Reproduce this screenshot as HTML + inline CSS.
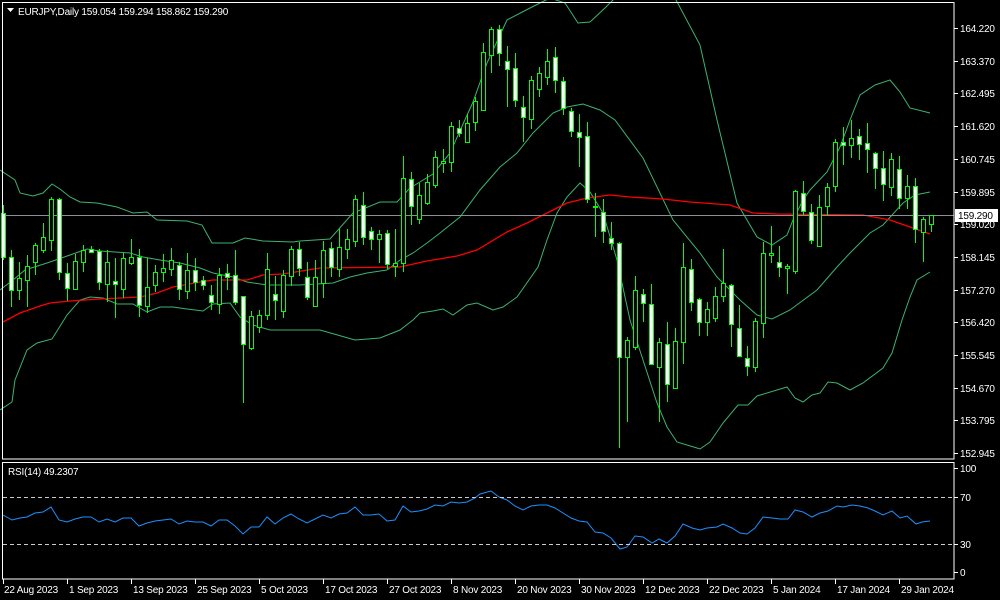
<!DOCTYPE html>
<html><head><meta charset="utf-8"><style>
html,body{margin:0;padding:0;background:#000;width:1000px;height:600px;overflow:hidden}
svg{display:block}
text{font-family:"Liberation Sans",sans-serif;font-size:10px;letter-spacing:-0.2px;fill:#fff}
</style></head><body>
<svg id="s" width="1000" height="600" xmlns="http://www.w3.org/2000/svg">
<rect width="1000" height="600" fill="#000"/>
<g id="bands" fill="none" stroke="#3cb371" stroke-width="1"></g>
<polyline id="ma" fill="none" stroke="#ff0000" stroke-width="1.3"/>
<line x1="3" y1="215.5" x2="954" y2="215.5" stroke="#8a8f96" stroke-width="1"/>
<g id="candles"></g>
<g id="rsi"></g>
<g stroke="#fff" stroke-width="1" fill="none">
<rect x="2.5" y="2.5" width="951.5" height="456.5"/>
<rect x="2.5" y="462.5" width="951.5" height="116.5"/>
</g>
<g stroke="#ccc" stroke-dasharray="4,3" stroke-width="1">
<line x1="3" y1="497.5" x2="953" y2="497.5"/>
<line x1="3" y1="544.5" x2="953" y2="544.5"/>
</g>
<polygon points="7,8 14,8 10.5,12" fill="#fff"/>
<text x="18" y="15">EURJPY,Daily  159.054 159.294 158.862 159.290</text>
<text x="8" y="475">RSI(14) 49.2307</text>
<g id="axis"></g>
<rect x="955" y="209" width="43" height="13" fill="#fff"/>
<text x="958" y="219" style="fill:#000">159.290</text>
</svg>
<script>
var NS="http://www.w3.org/2000/svg";
function el(t,a,p){var e=document.createElementNS(NS,t);for(var k in a)e.setAttribute(k,a[k]);p.appendChild(e);return e;}
var C=[[213,257,205,260,1],[257,290,250,307,1],[278,290,262,300,0],[266,280,255,307,0],[245,262,243,275,0],[237,250,223,253,0],[199,240,197,251,0],[199,272,198,280,1],[273,288,263,301,1],[261,289,254,290,0],[250,262,245,272,0],[249,252,246,253,1],[251,282,249,290,1],[262,284,250,302,0],[281,284,258,318,1],[258,289,253,298,0],[257,263,239,265,0],[257,305,249,317,1],[287,306,258,313,0],[272,285,265,292,0],[268,272,254,282,0],[260,269,248,276,0],[265,289,262,300,1],[270,291,253,299,0],[270,282,258,291,1],[280,285,276,290,1],[295,302,285,310,1],[275,304,268,314,0],[273,277,264,290,1],[275,302,250,305,1],[296,344,296,403,1],[316,348,311,350,0],[315,327,310,333,0],[269,315,253,320,0],[294,300,276,320,1],[275,311,270,318,0],[249,276,246,286,0],[249,268,242,276,1],[277,297,262,300,1],[277,306,260,307,0],[250,283,241,298,0],[248,267,242,277,1],[247,269,229,277,0],[239,249,229,259,0],[199,241,195,247,0],[205,237,192,245,1],[231,239,227,250,1],[234,239,230,263,0],[233,264,230,269,1],[263,266,229,277,0],[178,263,156,272,0],[179,206,172,225,1],[195,219,183,224,0],[182,203,174,205,0],[157,185,151,188,0],[161,163,149,173,0],[126,162,122,172,0],[128,133,120,137,1],[123,142,114,143,0],[101,122,97,131,0],[52,110,43,111,0],[29,55,27,73,0],[29,53,25,66,1],[61,69,46,107,1],[68,100,53,107,1],[107,117,96,142,1],[80,119,76,129,0],[73,89,67,97,0],[61,77,49,85,0],[57,80,47,93,1],[81,108,77,115,1],[111,131,108,137,1],[132,137,114,167,1],[136,199,122,203,1],[206,207,193,237,1],[212,231,199,243,1],[238,243,222,250,1],[243,357,242,448,1],[340,357,337,422,0],[290,347,276,350,0],[294,303,289,322,1],[304,364,284,365,1],[342,367,338,422,0],[344,384,322,402,1],[341,388,328,388,0],[267,342,243,364,0],[269,302,259,311,1],[299,322,298,336,1],[309,322,302,336,0],[296,318,287,322,0],[283,296,249,302,0],[285,324,284,347,1],[328,356,305,356,1],[358,366,346,376,1],[321,367,318,372,0],[253,323,242,338,0],[253,255,226,263,0],[262,267,246,277,1],[266,268,264,294,0],[191,271,190,274,0],[193,211,181,215,1],[212,240,204,244,1],[207,246,195,247,0],[187,206,183,216,0],[142,186,139,192,0],[142,145,127,165,1],[138,145,120,158,0],[136,144,129,160,1],[143,149,123,173,1],[153,168,152,189,1],[168,184,151,201,1],[159,187,153,196,0],[169,198,156,209,1],[186,198,175,209,0],[186,229,178,243,1],[219,232,217,262,0],[215,224,215,232,0]];
var g=document.getElementById("candles");
C.forEach(function(c,i){var x=3+8*i;
 el("line",{x1:x+.5,y1:c[2],x2:x+.5,y2:c[3],stroke:"#00ff00","stroke-width":1},g);
 var h=Math.max(c[1]-c[0],1);
 el("rect",{x:x-1.5,y:c[0]+.5,width:4,height:h,fill:c[4]?"#fff":"#000",stroke:"#00ff00","stroke-width":1},g);
});
var B=[
"0,170 15,180 20,193 33,196 43,193 52,184 60,189 70,197 80,202 97,203 117,207 133,213 147,212 157,220 187,221 202,225 212,243 233,243 245,238 263,241 293,242 300,241 330,239 353,213 380,202 397,202 410,188 433,174 450,153 473,102 487,63 507,20 530,8 550,-2 565,3 578,23 590,22 605,8 615,-2",
"675,-2 700,45 717,120 737,203 757,237 772,245 787,235 793,220 803,200 810,190 827,172 840,147 850,120 860,95 875,85 890,80 900,92 910,108 930,113",
"0,290 13,280 25,270 47,263 70,255 87,249 100,251 130,253 143,257 160,260 180,263 200,268 213,273 233,277 247,282 267,285 300,285 333,283 350,277 367,273 387,270 400,260 413,253 427,243 440,233 460,217 480,190 500,167 517,153 533,133 553,113 567,107 583,104 600,110 615,120 643,158 673,220 700,253 717,277 740,300 757,315 772,319 790,310 817,290 837,267 850,253 870,233 883,225 903,203 915,195 930,192",
"0,410 12,402 15,380 27,350 37,343 52,339 67,315 80,300 90,297 103,298 117,304 133,304 147,312 160,307 173,307 187,309 203,311 213,304 230,303 240,317 253,325 270,330 320,330 355,340 380,338 400,330 413,320 420,313 433,311 443,309 453,315 467,305 477,303 493,310 503,307 517,297 538,267 547,240 557,213 567,197 580,183 590,192 603,213 617,260 630,320 643,360 657,403 667,427 677,442 697,448 700,449 710,442 723,423 738,405 748,405 757,396 787,387 795,398 803,402 812,395 820,393 828,382 837,383 850,390 863,383 883,368 892,353 902,320 910,297 917,280 930,272"];
var bg=document.getElementById("bands");
B.forEach(function(p){el("polyline",{points:p},bg);});
document.getElementById("ma").setAttribute("points","3,322 20,313 40,306 50,303 70,301 100,299 120,298 140,297 157,293 173,287 200,282 213,280 247,280 263,275 283,274 320,268 400,267 427,261 457,256 477,250 507,232 527,223 547,213 567,203 587,198 610,195 630,197 663,199 690,202 730,205 753,213 777,214 863,215 890,220 910,227 930,234");
var R="3,515 12,520 20,518 27,517 35,513 43,512 51,507 59,520 67,522 75,519 83,517 91,517 99,522 107,519 115,522 123,518 131,518 139,526 147,523 155,521 163,520 171,519 179,524 187,521 195,522 203,522 211,526 219,520 227,520 235,526 243,534 251,527 259,527 267,517 275,524 283,518 291,514 299,519 307,523 315,519 323,515 331,518 339,514 347,513 355,507 363,515 371,515 379,514 387,521 395,520 403,506 411,512 419,511 427,509 435,505 443,506 451,502 459,503 467,502 475,498 480,494 491,491 499,497 507,500 515,506 523,510 531,506 539,505 547,505 555,508 563,513 571,518 579,521 587,522 595,532 603,533 611,538 620,549 627,547 635,536 643,537 652,543 659,539 667,543 675,536 683,524 692,528 700,530 707,528 717,527 723,524 732,528 740,533 747,534 755,528 763,517 772,518 780,519 788,519 795,510 803,512 812,517 820,513 828,511 837,506 843,507 852,505 860,506 868,508 875,511 883,515 892,511 900,518 907,516 916,524 922,522 930,521";
el("polyline",{points:R,fill:"none",stroke:"#1e90ff","stroke-width":1},document.getElementById("rsi"));
var ax=document.getElementById("axis");
var P=["164.220","163.370","162.495","161.620","160.745","159.895","159.020","158.145","157.270","156.420","155.545","154.670","153.795","152.945"];
P.forEach(function(t,i){var y=Math.round(28+i*32.7);
 el("line",{x1:954,y1:y+.5,x2:958,y2:y+.5,stroke:"#fff"},ax);
 var e=el("text",{x:960,y:y+4},ax);e.textContent=t;});
[["100",468],["70",497],["30",544],["0",572]].forEach(function(a){
 el("line",{x1:954,y1:a[1]+.5,x2:958,y2:a[1]+.5,stroke:"#fff"},ax);
 var e=el("text",{x:960,y:a[1]+4},ax);e.textContent=a[0];});
var D=["22 Aug 2023","1 Sep 2023","13 Sep 2023","25 Sep 2023","5 Oct 2023","17 Oct 2023","27 Oct 2023","8 Nov 2023","20 Nov 2023","30 Nov 2023","12 Dec 2023","22 Dec 2023","5 Jan 2024","17 Jan 2024","29 Jan 2024"];
D.forEach(function(t,i){var x=3+64*i;
 el("line",{x1:x+.5,y1:579,x2:x+.5,y2:584,stroke:"#fff"},ax);
 var e=el("text",{x:i==0?4:x+2,y:593},ax);e.textContent=t;});
</script>
</body></html>
